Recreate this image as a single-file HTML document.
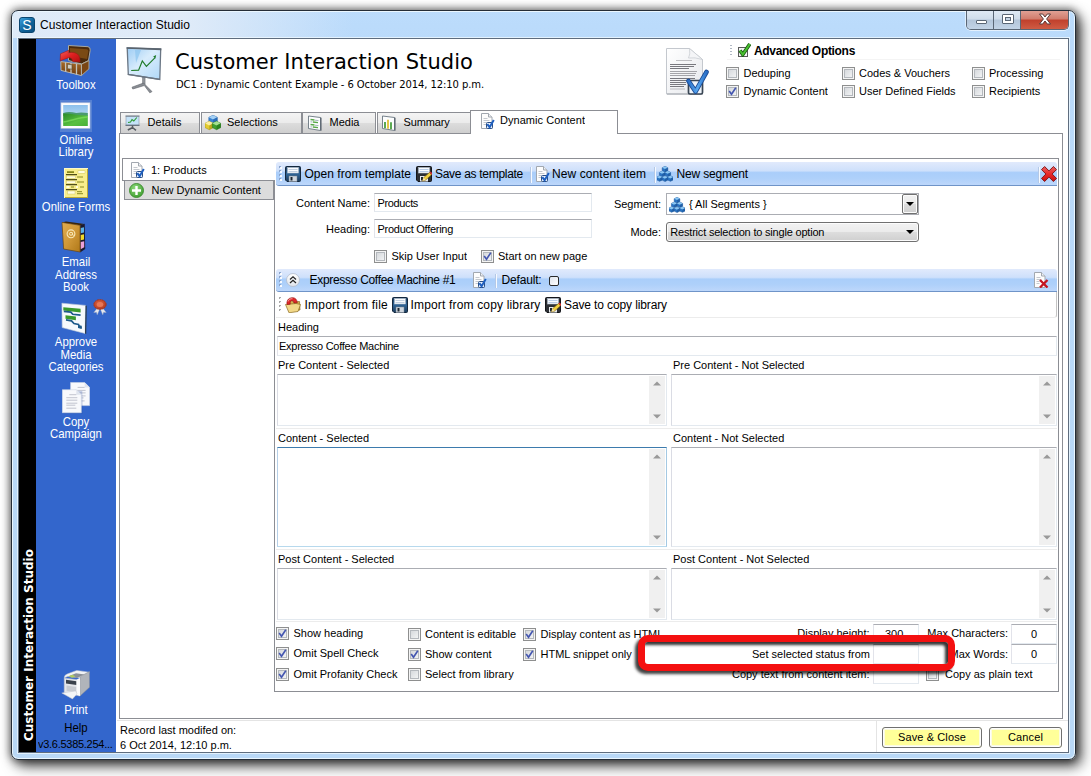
<!DOCTYPE html>
<html lang="en"><head><meta charset="utf-8"><title>Customer Interaction Studio</title>
<style>
html,body{margin:0;padding:0}
body{width:1091px;height:776px;position:relative;overflow:hidden;background:#fff;font-family:"Liberation Sans",sans-serif;font-size:11px;color:#000}
.a{position:absolute;box-sizing:border-box}
.t{white-space:nowrap}
.ms{font:11px "Liberation Sans",sans-serif;transform:scaleY(1.06)}
.sg{font:12px "Liberation Sans",sans-serif}
.sgb{font:bold 12px "Liberation Sans",sans-serif}
.vd{font-family:"DejaVu Sans","Liberation Sans",sans-serif}
.w{color:#fff}
.c{text-align:center}
.tab{border:1px solid #8c8e94;border-bottom:none;background:linear-gradient(#f4f4f4 0%,#ebebeb 48%,#dcdcdc 52%,#cfcfcf 100%)}
.inp{border:1px solid #e3e9ef;border-top-color:#abadb3;border-left-color:#e2e3ea;background:#fff}
.ta{border:1px solid #e3e9ef;border-top-color:#abadb3;border-left-color:#dadce4;background:#fff}
.sb{background:#f0f0f0}
.cb{width:13px;height:13px;border:1px solid #8e8f8f;background:linear-gradient(135deg,#cfd2d6 0%,#e6e8ea 55%,#fafafa 100%);box-shadow:inset 0 0 0 1px #f4f4f4, inset 0 0 0 2px #b4b8bd}
.tb{background:linear-gradient(#e1eafc 0%,#cee0fb 38%,#aacefa 46%,#aed0fa 70%,#bdd7fb 100%);border-radius:3px 3px 0 3px;border-bottom:1px solid #6f94c8}
.btn{border:1px solid #707070;border-radius:3px;background:#ffff99;box-shadow:inset 0 0 0 1px #fdfdfd, inset 0 0 0 2px #fcfce0}

</style></head>
<body>
<div class="a" id="win" style="left:11px;top:10px;width:1065px;height:750px;border-radius:7px;border:1px solid #252d37;background:linear-gradient(#bcdcfc 0%,#badafa 4%,#b9d8f6 100%);box-shadow:inset 0 0 0 1px rgba(240,250,255,.9), 0 0 9px 1px rgba(0,0,0,.55), 5px 6px 14px rgba(0,0,0,.7)"></div>
<div class="a" style="left:13px;top:12px;width:340px;height:26px;border-radius:5px 0 0 0;background:linear-gradient(90deg,rgba(226,236,248,.9) 0%,rgba(226,236,248,.95) 50%,rgba(226,236,248,0) 100%)"></div>
<div class="a " style="left:18px;top:38px;width:1051px;height:715px;border:1px solid #5f6d7e;background:#fff;box-shadow:0 0 0 1px rgba(240,250,255,.75)"></div>
<div class="a" style="left:19px;top:17px;width:16px;height:16px;border-radius:3px;background:linear-gradient(135deg,#3aa0dc,#0c5f96 60%,#0a4f80);border:1px solid #0a4670;color:#fff;font:14px/15px 'Liberation Sans',sans-serif;text-align:center">S</div>
<span id="t1" class="a t sg" style="top:17.5px;line-height:14px;left:40px;letter-spacing:0.047px;">Customer Interaction Studio</span>
<div class="a" style="left:966px;top:11px;width:103px;height:19px;border:1px solid #5a6675;border-top:none;border-radius:0 0 5px 5px;overflow:hidden;box-shadow:0 1px 0 rgba(255,255,255,.6),1px 0 0 rgba(255,255,255,.5),-1px 0 0 rgba(255,255,255,.5)"><div class="a" style="left:0;top:0;width:27px;height:18px;background:linear-gradient(#dfe9f4 0%,#cfdcea 45%,#b4c6da 50%,#c2d3e6 100%);border-right:1px solid #5a6675"></div><div class="a" style="left:27px;top:0;width:27px;height:18px;background:linear-gradient(#dfe9f4 0%,#cfdcea 45%,#b4c6da 50%,#c2d3e6 100%);border-right:1px solid #5a6675"></div><div class="a" style="left:54px;top:0;width:48px;height:18px;background:linear-gradient(#e0a094 0%,#d07c6c 45%,#c0402c 50%,#cf5c44 100%)"></div><div class="a" style="left:9px;top:9px;width:11px;height:4px;background:#fff;border:1px solid #5a6675;border-radius:1px"></div><div class="a" style="left:35px;top:3px;width:12px;height:10px;background:#fff;border:1px solid #5a6675;border-radius:1px"></div><div class="a" style="left:38px;top:6px;width:6px;height:4px;background:#c4d3e4;border:1px solid #5a6675"></div><svg class="a" style="left:71px;top:2px" width="14" height="12" viewBox="0 0 14 12"><path d="M1.500 1h3.200l2.300 3 2.300-3h3.200l-3.900 5 3.900 5h-3.200l-2.300-3-2.300 3h-3.200l3.900-5z" fill="#fff" stroke="#5a3a38" stroke-width="1"/></svg></div>
<div class="a " style="left:19px;top:39px;width:17px;height:713px;background:#000"></div>
<div class="a " style="left:36px;top:39px;width:80px;height:713px;background:#3366cc"></div>
<div class="a t vd w" style="left:21px;top:752px;width:210px;height:17px;line-height:17px;font-size:12px;font-weight:bold;transform-origin:0 0;transform:rotate(-90deg);padding-left:11px" id="vtxt">Customer Interaction Studio</div>
<div class="a" style="left:58px;top:42px;line-height:0"><svg width="34" height="36" viewBox="0 0 34 36"><defs><linearGradient id="g1" x1="0" y1="0" x2="0" y2="1"><stop offset="0" stop-color="#a86a28"/><stop offset="1" stop-color="#6a3a10"/></linearGradient><linearGradient id="g2" x1="0" y1="0" x2="1" y2="1"><stop offset="0" stop-color="#f06060"/><stop offset=".5" stop-color="#e02020"/><stop offset="1" stop-color="#b01010"/></linearGradient></defs><path d="M10.500 3.500l19.500 1.200q2.500.500 2.200 3.500l-1.700 10.300-7 3.500-13-3.500z" fill="#4a2a0c" stroke="#a8a8a0" stroke-width="1"/><path d="M12 6l17 1.200q1.500.300 1.300 2.300l-1.200 7.500-17-3z" fill="#7a4a14"/><path d="M23.400 22.200l7.600-3.600-.100 8.300-7.500 6.700z" fill="#7a4614" stroke="#b8b4a0" stroke-width=".8"/><path d="M2.800 19.600l20.600 2.600v11.400l-20.400-5.200z" fill="url(#g1)" stroke="#b4b4ac" stroke-width="1"/><path d="M7.500 20.300l.200 9.500M13 21v10.300M18.500 21.700v11" stroke="#c4c4bc" stroke-width="1.300"/><rect x="9.500" y="22.300" width="4.500" height="4.500" fill="#d0ccc0" stroke="#5a4a30" stroke-width=".6" transform="skewY(7) translate(0,-1.300)"/><path d="M2.200 18.800l.300-7 8.500-3.600-.800 2.600q7-1.500 10.500 2.500 1.500 2 1.300 6.700l-7.300-.400q-.200-3.200-3.200-4.200z" fill="url(#g2)" stroke="#a01818" stroke-width=".6"/></svg></div>
<span class="a t ms c" style="left:36px;width:80px;top:77.5px;line-height:14px;font-size:11.400px;color:#fff">Toolbox</span>
<div class="a" style="left:60px;top:100px;line-height:0"><svg width="32" height="32" viewBox="0 0 32 32"><defs><linearGradient id="g3" x1="0" y1="0" x2="0" y2="1"><stop offset="0" stop-color="#8cc0ec"/><stop offset="1" stop-color="#d8eef8"/></linearGradient><linearGradient id="g4" x1="0" y1="0" x2="1" y2="1"><stop offset="0" stop-color="#2a8a28"/><stop offset=".6" stop-color="#58c040"/><stop offset="1" stop-color="#48b038"/></linearGradient></defs><rect x="0" y="0" width="32" height="32" fill="#5580d2"/><rect x="1" y="2.800" width="29" height="25.500" fill="#fdfdfd" stroke="#b8c4dc" stroke-width=".6"/><rect x="3.200" y="5" width="24.600" height="21" fill="url(#g3)"/><path d="M3.200 13c4-1.500 9-1 13 0 4-1 8-.500 11.600 0v3h-24.600z" fill="#4a9a70"/><path d="M3.200 13.500c8 0 16 2 24.600 2v10.500h-24.600z" fill="url(#g4)"/><path d="M3.200 22c8-1 16-5 24.600-5" fill="none" stroke="#80e060" stroke-width="1.500" opacity=".7"/></svg></div>
<span class="a t ms c" style="left:36px;width:80px;top:132.5px;line-height:14px;font-size:11.400px;color:#fff">Online</span>
<span class="a t ms c" style="left:36px;width:80px;top:145px;line-height:14px;font-size:11.400px;color:#fff">Library</span>
<div class="a" style="left:64px;top:168px;line-height:0"><svg width="24" height="30" viewBox="0 0 24 30"><rect x=".500" y=".500" width="23" height="29" fill="#f8ee8c" stroke="#fdf8c8" stroke-width="1"/><rect x="23" y="1" width="1" height="29" fill="#b8a838"/><rect x="1" y="29" width="23" height="1" fill="#b8a838"/><rect x="3" y="3.300" width="7" height="1.600" fill="#7a7a10"/><rect x="14" y="2.800" width="7" height="2.400" fill="#fffde0" stroke="#c8bc58" stroke-width=".4"/><rect x="2" y="6.200" width="11" height="1" fill="#2a2a00"/><rect x="2.500" y="8" width="9" height="2.400" fill="#fffde0" stroke="#c8bc58" stroke-width=".4"/><rect x="13" y="8.500" width="6" height="1" fill="#8a8a20"/><rect x="2" y="11.200" width="11" height="1" fill="#2a2a00"/><rect x="2.500" y="13" width="9" height="2.400" fill="#fffde0" stroke="#c8bc58" stroke-width=".4"/><rect x="13" y="13.500" width="7" height="1" fill="#8a8a20"/><rect x="2" y="16.200" width="11" height="1" fill="#2a2a00"/><rect x="2.500" y="18" width="3" height="2" fill="#fffde0"/><rect x="7" y="18.500" width="3" height="1" fill="#8a8a20"/><rect x="12" y="18" width="2" height="2" fill="#fffde0"/><rect x="16" y="18.500" width="4" height="1" fill="#8a8a20"/><rect x="2" y="21.200" width="11" height="1" fill="#2a2a00"/><rect x="3.500" y="23" width="7.500" height="3" fill="#fffde0" stroke="#c8bc58" stroke-width=".4"/><rect x="13" y="23.200" width="5" height="1" fill="#8a8a20"/><rect x="13" y="25.200" width="6" height="1" fill="#8a8a20"/></svg></div>
<span class="a t ms c" style="left:36px;width:80px;top:199.5px;line-height:14px;font-size:11.400px;color:#fff">Online Forms</span>
<div class="a" style="left:61px;top:221px;line-height:0"><svg width="26" height="33" viewBox="0 0 26 33"><defs><linearGradient id="g5" x1="0" y1="0" x2="1" y2="1"><stop offset="0" stop-color="#e0ac50"/><stop offset=".5" stop-color="#d09838"/><stop offset="1" stop-color="#b07818"/></linearGradient></defs><path d="M1 1.400l4-1 18.500 2.500-4.400 1.400z" fill="#3a2408"/><path d="M19.100 4.300l4.600-1.500.500 25.200-5.100 3.500z" fill="#1a1a30"/><path d="M19.600 7l3.400-.800v5.300l-3.400.800z" fill="#58b0e8"/><path d="M19.600 14l3.400-.800v5.300l-3.400.800z" fill="#f0d828"/><path d="M19.600 21l3.600-.800v6l-3.600 2z" fill="#e8a0d8"/><path d="M1 1.400l18.100 2.900v26.700l-16.500-3z" fill="url(#g5)" stroke="#6a4410" stroke-width=".7"/><circle cx="10" cy="12.800" r="3.900" fill="none" stroke="#f8e8b8" stroke-width="1.100"/><circle cx="10" cy="12.800" r="1.500" fill="none" stroke="#f8e8b8" stroke-width="1"/><path d="M11.500 11.500v2.500q1 .800 2.200-.500" fill="none" stroke="#f8e8b8" stroke-width=".9"/></svg></div>
<span class="a t ms c" style="left:36px;width:80px;top:255px;line-height:14px;font-size:11.400px;color:#fff">Email</span>
<span class="a t ms c" style="left:36px;width:80px;top:267.5px;line-height:14px;font-size:11.400px;color:#fff">Address</span>
<span class="a t ms c" style="left:36px;width:80px;top:280px;line-height:14px;font-size:11.400px;color:#fff">Book</span>
<div class="a" style="left:61px;top:302px;line-height:0"><svg width="26" height="33" viewBox="0 0 26 33"><path d="M.900 1.200l23.700 2.200-.600 28-22.800-5.800z" fill="#f6f9fc" stroke="#c4ccd8" stroke-width=".6"/><path d="M24.600 3.400l1.200.300-.600 28.300-1.200-.600z" fill="#2a3a4a"/><path d="M2.300 5.300l17.300 1.500v3.600l-17.300-1.800z" fill="#3a9a2c"/><path d="M2.800 9.300l7 .800 2 2.200 7.800.900" fill="none" stroke="#1e5a8a" stroke-width="1.700"/><path d="M4.500 13.300l10.400 1.200v3.800l-10.400-1.600z" fill="#3a9a2c"/><path d="M5 17.800l5.500 1 2.500 2.700 4.500 1 1 2.500 2.200.600" fill="none" stroke="#1e5a8a" stroke-width="1.700"/><path d="M17 23l3.700.800v3.200l-3.700-.900z" fill="#1e5a8a"/></svg></div>
<div class="a" style="left:93px;top:299px;line-height:0"><svg width="14" height="17" viewBox="0 0 14 17"><defs><radialGradient id="g6" cx=".45" cy=".4" r=".7"><stop offset="0" stop-color="#e06848"/><stop offset="1" stop-color="#a83018"/></radialGradient></defs><path d="M4 9.500l-3.200 4 2.700-.300.700 2.600 2.300-5.300zM10 9.500l3.200 4-2.700-.300-.700 2.600-2.300-5.300z" fill="#e4e8f0" stroke="#a8b0c0" stroke-width=".4"/><ellipse cx="7" cy="5.500" rx="6.200" ry="4.900" fill="url(#g6)" stroke="#a83018" stroke-width=".8" stroke-dasharray="1.800 .700"/><ellipse cx="7" cy="5.500" rx="3.300" ry="2.500" fill="#e87858"/></svg></div>
<span class="a t ms c" style="left:36px;width:80px;top:335px;line-height:14px;font-size:11.400px;color:#fff">Approve</span>
<span class="a t ms c" style="left:36px;width:80px;top:347.5px;line-height:14px;font-size:11.400px;color:#fff">Media</span>
<span class="a t ms c" style="left:36px;width:80px;top:360px;line-height:14px;font-size:11.400px;color:#fff">Categories</span>
<div class="a" style="left:62px;top:382px;line-height:0"><svg width="28" height="32" viewBox="0 0 28 32"><path d="M8.6 0.4h14l5 5v18.2h-19z" fill="#f8f9fc" stroke="#d0d6e4" stroke-width=".6"/><path d="M22.6 0.4v5h5z" fill="#dfe4ee"/><path d="M15.6 5.4h7M12.6 8.4h11M12.6 10.9h11M12.6 13.9h11M12.6 15.9h9M12.6 18.9h10" stroke="#b4b8c4" stroke-width=".8"/><path d="M.300 8h19l.500 23h-19.500z" fill="#2a50a8" opacity=".25" transform="translate(1,1)"/><path d="M0.3 7.7h14l5 5v18h-19z" fill="#f8f9fc" stroke="#d0d6e4" stroke-width=".6"/><path d="M14.3 7.7v5h5z" fill="#dfe4ee"/><path d="M7.3 12.7h7M4.3 15.7h11M4.3 18.2h11M4.3 21.2h11M4.3 23.2h9M4.3 26.2h10" stroke="#b4b8c4" stroke-width=".8"/></svg></div>
<span class="a t ms c" style="left:36px;width:80px;top:414.5px;line-height:14px;font-size:11.400px;color:#fff">Copy</span>
<span class="a t ms c" style="left:36px;width:80px;top:427px;line-height:14px;font-size:11.400px;color:#fff">Campaign</span>
<div class="a" style="left:61px;top:670px;line-height:0"><svg width="30" height="31" viewBox="0 0 30 31"><path d="M3.200 8q0-3 3-4l9.500-3.600 12.700 1.800-9.400 5.800-12.500-1.500z" fill="#f0f2f4" stroke="#c0c4cc" stroke-width=".5"/><path d="M7 6.500l8-3.200 8.500 1.300-7.500 3.500z" fill="#8a9098"/><path d="M7.500 6.300l4-1.600 3 1.800-3.500 1.300z" fill="#b0cc60"/><path d="M19 8q0-1.500 1.500-2.200l7.900-4.200.1 15.700-9.500 8.700z" fill="#b0b4ba" stroke="#888c94" stroke-width=".5"/><path d="M3.200 8l15.800 2v16l-15.800-3z" fill="#e4e6ea" stroke="#b8bcc4" stroke-width=".5"/><path d="M5 9.800l10.500 1.400v3.800l-10.500-1.600z" fill="#3a424c"/><path d="M5.500 15.500l10 1.500v5.500l-10-1.700z" fill="#c8ccd2"/><path d="M15.500 10q1.500-1.500 3.500-2v18l-3.500-1.500z" fill="#fafbfc"/><path d="M.800 23l13.900-2.100 1.300 3-4.500 5z" fill="#f4f6f8" stroke="#c4c8d0" stroke-width=".5"/></svg></div>
<span class="a t ms c" style="left:36px;width:80px;top:702.5px;line-height:14px;font-size:11.400px;color:#fff">Print</span>
<span class="a t ms c" style="left:36px;width:80px;top:721px;line-height:14px;font-size:11.400px;color:#000">Help</span>
<span id="t2" class="a t ms" style="top:737px;line-height:14px;left:38px;letter-spacing:-0.275px;">v3.6.5385.254...</span>
<div class="a" style="left:126px;top:46px;line-height:0"><svg width="37" height="49" viewBox="0 0 37 49"><defs><linearGradient id="g7" x1="0" y1="0" x2="1" y2="1"><stop offset="0" stop-color="#9cccf4"/><stop offset=".45" stop-color="#d8ecfc"/><stop offset="1" stop-color="#b0d8f8"/></linearGradient></defs><path d="M16.500 31h2.600v7.500h-2.600z" fill="#90949a" stroke="#6a6e74" stroke-width=".5"/><path d="M17.500 37l-11.500 4.200.800 1.800 11.500-3.500 5.500 7.300 2.200-1.200z" fill="#8a8e94" stroke="#5e6268" stroke-width=".6"/><path d="M1.200 1.800l33.500 1.200-.900 30.400-31.500-5z" fill="url(#g7)" stroke="#6a7684" stroke-width="1.300"/><path d="M.600 1.200l34.700 1.300v1.700l-34.700-1.400z" fill="#5a646e"/><path d="M1.800 27.800l32 5v1.200l-32-5z" fill="#6a7480"/><path d="M9 4l6 0-5 13z" fill="#8cc4f0" opacity=".7"/><path d="M5.200 24.500l7.400-.400 3.700-9.100 4.100 5.400 8.700-8.700" fill="none" stroke="#1e7a28" stroke-width="1.150"/><path d="M27.200 10.500l3-1.500-.800 3.600z" fill="#1e7a28"/></svg></div>
<span id="t3" class="a t vd" style="top:47.5px;line-height:28px;left:175px;letter-spacing:0.068px;font-size:21px;">Customer Interaction Studio</span>
<span id="t4" class="a t vd" style="top:77.5px;line-height:14px;left:176px;letter-spacing:-0.092px;font-size:10px;">DC1 : Dynamic Content Example - 6 October 2014, 12:10 p.m.</span>
<div class="a" style="left:665px;top:47px;line-height:0"><svg width="44" height="49" viewBox="0 0 44 49"><defs><linearGradient id="g8" x1="0" y1="0" x2="1" y2="1"><stop offset="0" stop-color="#ffffff"/><stop offset="1" stop-color="#e6e8ec"/></linearGradient><linearGradient id="g9" x1="0" y1="0" x2="1" y2="0"><stop offset="0" stop-color="#2a70c8"/><stop offset=".5" stop-color="#58a8f0"/><stop offset="1" stop-color="#2a70c8"/></linearGradient></defs><path d="M1.500 1.500h23l13 11v34.500h-36z" fill="url(#g8)" stroke="#c4c8ce" stroke-width="1"/><path d="M2 47h35.500" stroke="#b4b8be" stroke-width="1.400"/><path d="M24.500 1.500q1 6-1 9.500 6-1 14 1.500z" fill="#f4f5f7" stroke="#c4c8ce" stroke-width=".7"/><path d="M11 13.500h16" stroke="#b0b0b4" stroke-width=".8"/><path d="M5 17.500h26M5 19.500h24M5 21.500h19" stroke="#6a6a70" stroke-width=".9"/><path d="M5 24.500h27M5 26.500h26M5 28.500h25" stroke="#909096" stroke-width=".8"/><path d="M5 31.500h25M5 33.500h17M5 35.500h16M5 37.500h16M5 39.500h14" stroke="#6a6a70" stroke-width=".9"/><path d="M5 42h15" stroke="#a0a0a6" stroke-width=".7"/><rect x="23.500" y="33.500" width="14" height="13.500" rx="1.500" fill="#eef4fb" stroke="#3a4654" stroke-width="1.700"/><path d="M23.500 34l7 10.500 11-19.500" fill="none" stroke="#1a4a94" stroke-width="4.600" stroke-linecap="round" stroke-linejoin="round"/><path d="M23.500 34l7 10.500 11-19.500" fill="none" stroke="url(#g9)" stroke-width="2.900" stroke-linecap="round" stroke-linejoin="round"/></svg></div>
<div class="a" style="left:730px;top:45px;width:2px;height:12px;background:repeating-linear-gradient(#b0b8c4 0 1px,transparent 1px 3px)"></div>
<div class="a" style="left:737px;top:43px;line-height:0"><svg width="14" height="14" viewBox="0 0 14 14"><rect x="1.500" y="4.500" width="9" height="9" fill="#f4f4f4" stroke="#5a5a5a"/><path d="M3 7.500l2.800 4 7-10.500" fill="none" stroke="#1a5a10" stroke-width="3.600"/><path d="M3 7.500l2.800 4 7-10.500" fill="none" stroke="#48c030" stroke-width="2"/></svg></div>
<span id="t5" class="a t sgb" style="top:44px;line-height:14px;left:754px;letter-spacing:-0.314px;">Advanced Options</span>
<div class="a " style="left:727px;top:59px;width:333px;height:1px;background:#f4f4f4"></div>
<div class="a cb" style="left:726px;top:66.5px"></div>
<span id="t6" class="a t ms" style="top:66px;line-height:14px;left:743.5px;">Deduping</span>
<div class="a cb" style="left:726px;top:84.5px"><svg width="11" height="11" viewBox="0 0 11 11" style="position:absolute;left:0;top:0"><path d="M2.200 5l2.300 3.300 4.300-6.600" fill="none" stroke="#4456b0" stroke-width="1.600"/></svg></div>
<span id="t7" class="a t ms" style="top:84px;line-height:14px;left:743.5px;">Dynamic Content</span>
<div class="a cb" style="left:842px;top:66.5px"></div>
<span id="t8" class="a t ms" style="top:66px;line-height:14px;left:859px;">Codes &amp; Vouchers</span>
<div class="a cb" style="left:842px;top:84.5px"></div>
<span id="t9" class="a t ms" style="top:84px;line-height:14px;left:859px;">User Defined Fields</span>
<div class="a cb" style="left:972px;top:66.5px"></div>
<span id="t10" class="a t ms" style="top:66px;line-height:14px;left:989px;">Processing</span>
<div class="a cb" style="left:972px;top:84.5px"></div>
<span id="t11" class="a t ms" style="top:84px;line-height:14px;left:989px;">Recipients</span>
<div class="a " style="left:119px;top:133px;width:944px;height:586px;border:1px solid #8c8e94;background:#fff"></div>
<div class="a tab" style="left:120px;top:112px;width:80px;height:21px;"></div>
<div class="a" style="left:125px;top:115px;line-height:0"><svg width="16" height="16" viewBox="0 0 16 16"><rect x="1" y="1.500" width="13" height="8.500" fill="#c4e2f8" stroke="#8a98a8" stroke-width=".6"/><path d="M.500 1h14M.500 10.300h14" stroke="#6a7480" stroke-width="1.200"/><path d="M3 7.500l2.500-.500 1.500-2.500 1.800 1.500 3-3.500" fill="none" stroke="#2c9a30" stroke-width="1.100"/><path d="M7.500 10.500v2.500M7.800 12.500l-5 2.500M7.500 12.500l3.500 2.800" stroke="#555a60" stroke-width="1.500" fill="none"/></svg></div>
<span id="t12" class="a t ms" style="top:115px;line-height:14px;left:147.5px;letter-spacing:0.052px;">Details</span>
<div class="a tab" style="left:201px;top:112px;width:101px;height:21px;"></div>
<div class="a" style="left:205px;top:115px;line-height:0"><svg width="16" height="16" viewBox="0 0 16 16"><path d="M3.8 2.325l4.25 -2.125 4.25 2.125v4.25l-4.25 2.125 -4.25 -2.125z" fill="#3a84d4" stroke="#1e5aa0" stroke-width=".5"/><path d="M3.8 2.325l4.25 -2.125 4.25 2.125 -4.25 2.125z" fill="#a4d0f4"/><path d="M8.05 4.45v4.25l4.25 -2.125v-4.25z" fill="#1e5aa0" opacity=".55"/><path d="M0 8.325l4.25 -2.125 4.25 2.125v4.25l-4.25 2.125 -4.25 -2.125z" fill="#e4cc30" stroke="#a08c10" stroke-width=".5"/><path d="M0 8.325l4.25 -2.125 4.25 2.125 -4.25 2.125z" fill="#fbf0a0"/><path d="M4.25 10.45v4.25l4.25 -2.125v-4.25z" fill="#a08c10" opacity=".55"/><path d="M7.3 8.325l4.25 -2.125 4.25 2.125v4.25l-4.25 2.125 -4.25 -2.125z" fill="#3ea030" stroke="#1e6e14" stroke-width=".5"/><path d="M7.3 8.325l4.25 -2.125 4.25 2.125 -4.25 2.125z" fill="#a4e090"/><path d="M11.55 10.45v4.25l4.25 -2.125v-4.25z" fill="#1e6e14" opacity=".55"/></svg></div>
<span id="t13" class="a t ms" style="top:115px;line-height:14px;left:227px;">Selections</span>
<div class="a tab" style="left:302px;top:112px;width:74px;height:21px;"></div>
<div class="a" style="left:308px;top:115px;line-height:0"><svg width="16" height="16" viewBox="0 0 16 16"><path d="M.500 1l12 1.500v13l-12-2z" fill="#fcfdfe" stroke="#6a7680" stroke-width=".9"/><path d="M12.500 2.500l1 .300v13l-1-.300z" fill="#4a5560"/><path d="M2.500 4.500l4 .500M5 7l5 .600M2.500 9.500l4 .500M5 12l5 .600" stroke="#58a848" stroke-width="1.300"/><path d="M7 5.200l3.500.400M2.500 6.800l2 .200M7 10.200l3.500.400M2.500 11.800l2 .200" stroke="#a8b4c0" stroke-width="1"/></svg></div>
<span id="t14" class="a t ms" style="top:115px;line-height:14px;left:329.5px;">Media</span>
<div class="a tab" style="left:377px;top:112px;width:94px;height:21px;"></div>
<div class="a" style="left:382px;top:115px;line-height:0"><svg width="16" height="16" viewBox="0 0 16 16"><path d="M.500 1l12 1.500v13l-12-2z" fill="#fcfdfe" stroke="#6a7680" stroke-width=".9"/><path d="M12.500 2.500l1 .300v13l-1-.300z" fill="#4a5560"/><path d="M3 13.200v-6.200" stroke="#4aa040" stroke-width="1.800"/><path d="M6 13.700v-9" stroke="#e0c030" stroke-width="1.800"/><path d="M9 14.200v-7" stroke="#4aa040" stroke-width="1.800"/></svg></div>
<span id="t15" class="a t ms" style="top:115px;line-height:14px;left:403.5px;letter-spacing:-0.152px;">Summary</span>
<div class="a " style="left:470px;top:110px;width:148px;height:24px;border:1px solid #8c8e94;border-bottom:none;background:#fff"></div>
<div class="a" style="left:480px;top:113px;line-height:0"><svg width="16" height="16" viewBox="0 0 16 16"><path d="M1.500 .500h7l3.500 3.500v11.500h-10.500z" fill="#fdfdfd" stroke="#a2a8b0"/><path d="M8.500 .500v3.500h3.500" fill="#eef0f3" stroke="#a2a8b0"/><path d="M3.500 5.500h4M3.500 7.500h6M3.500 9.500h3M3.500 11.500h3" stroke="#c4c8ce"/><rect x="6.500" y="9.500" width="6" height="6" rx="1" fill="#e4eefa" stroke="#2a4f86"/><path d="M7.300 11.200l2.300 3 4.200-7.200" fill="none" stroke="#1e5fc0" stroke-width="2"/></svg></div>
<span id="t16" class="a t ms" style="top:113px;line-height:14px;left:500px;letter-spacing:0.042px;">Dynamic Content</span>
<div class="a " style="left:274px;top:158px;width:785px;height:534px;border:1px solid #8c8e94;background:#fff"></div>
<div class="a " style="left:122px;top:158px;width:153px;height:23px;border:1px solid #8c8e94;border-right:none;background:#fff"></div>
<div class="a" style="left:130px;top:162px;line-height:0"><svg width="16" height="16" viewBox="0 0 16 16"><path d="M1.500 .500h7l3.500 3.500v11.500h-10.500z" fill="#fdfdfd" stroke="#a2a8b0"/><path d="M8.500 .500v3.500h3.500" fill="#eef0f3" stroke="#a2a8b0"/><path d="M3.500 5.500h4M3.500 7.500h6M3.500 9.500h3M3.500 11.500h3" stroke="#c4c8ce"/><rect x="6.500" y="9.500" width="6" height="6" rx="1" fill="#e4eefa" stroke="#2a4f86"/><path d="M7.300 11.200l2.300 3 4.200-7.200" fill="none" stroke="#1e5fc0" stroke-width="2"/></svg></div>
<span id="t17" class="a t ms" style="top:162.5px;line-height:14px;left:151px;">1: Products</span>
<div class="a " style="left:124px;top:180px;width:150px;height:20px;border:1px solid #8c8e94;background:#dcdcdc"></div>
<div class="a" style="left:129px;top:182.5px;line-height:0"><svg width="15" height="15" viewBox="0 0 15 15"><defs><radialGradient id="g10" cx=".4" cy=".3" r=".8"><stop offset="0" stop-color="#8cd878"/><stop offset="1" stop-color="#3a9a2c"/></radialGradient></defs><circle cx="7.500" cy="7.500" r="7" fill="url(#g10)" stroke="#3a8a2e" stroke-width=".9"/><path d="M7.500 3v9M3 7.500h9" stroke="#fff" stroke-width="2.400"/></svg></div>
<span id="t18" class="a t ms" style="top:182.5px;line-height:14px;left:151.5px;">New Dynamic Content</span>
<div class="a tb" style="left:276px;top:162px;width:781px;height:24px;"></div>
<div class="a" style="left:279px;top:166px;width:2px;height:16px;background:repeating-linear-gradient(#8aa4cc 0 2px,transparent 2px 4px)"></div>
<div class="a" style="left:280px;top:167px;width:2px;height:16px;background:repeating-linear-gradient(rgba(255,255,255,.9) 0 2px,transparent 2px 4px)"></div>
<div class="a" style="left:285px;top:166px;line-height:0"><svg width="16" height="16" viewBox="0 0 16 16"><defs><linearGradient id="g11" x1="0" y1="0" x2="0" y2="1"><stop offset="0" stop-color="#1e3e60"/><stop offset=".5" stop-color="#2f6496"/><stop offset="1" stop-color="#1c3a5a"/></linearGradient></defs><path d="M.500 1.500q0-1 1-1h13q1 0 1 1v13q0 1-1 1h-12.500l-1.500-1.500z" fill="url(#g11)" stroke="#14283e"/><rect x="2.500" y="1.500" width="11" height="5.500" fill="#fafcfe" stroke="#aebccc" stroke-width=".6"/><path d="M3.500 3.500h9M3.500 5.500h9" stroke="#c2d0e0"/><rect x="4" y="10" width="8" height="5.500" fill="#cfd6de" stroke="#7a8694" stroke-width=".5"/><rect x="5.500" y="11" width="2" height="3.500" fill="#1c2630"/></svg></div>
<span id="t19" class="a t sg" style="top:167px;line-height:14px;left:304.5px;letter-spacing:0.025px;">Open from template</span>
<div class="a" style="left:416px;top:166px;line-height:0"><svg width="16" height="16" viewBox="0 0 16 16"><path d="M.500 1.500q0-1 1-1h13q1 0 1 1v13q0 1-1 1h-12.500l-1.500-1.500z" fill="#2c2f34" stroke="#14161a"/><rect x="2.500" y="1.500" width="11" height="5.500" fill="#fafcfe" stroke="#aebccc" stroke-width=".6"/><path d="M3.500 3.500h9M3.500 5.500h9" stroke="#b8cce6"/><rect x="4" y="10" width="8" height="5.500" fill="#e8eaec"/><rect x="5" y="11" width="2" height="3.500" fill="#1c2630"/><path d="M6.500 14.800l1-3 6-5.300 2 2.300-6 5.300z" fill="#f0d040" stroke="#8a6c10" stroke-width=".7"/><path d="M13.500 6.500l1.200-1 2 2.300-1.200 1z" fill="#d83030"/><path d="M6.500 14.800l1-3 2 2.300z" fill="#f4e4b8"/></svg></div>
<span id="t20" class="a t sg" style="top:167px;line-height:14px;left:435px;letter-spacing:-0.295px;">Save as template</span>
<div class="a" style="left:530px;top:167px;width:2px;height:16px;background:#f6faff;border-left:1px solid #b4c8e6"></div>
<div class="a" style="left:535px;top:166px;line-height:0"><svg width="16" height="16" viewBox="0 0 16 16"><path d="M1.500 .500h7l3.500 3.500v11.500h-10.500z" fill="#fdfdfd" stroke="#a2a8b0"/><path d="M8.500 .500v3.500h3.500" fill="#eef0f3" stroke="#a2a8b0"/><path d="M3.500 5.500h4M3.500 7.500h6M3.500 9.500h3M3.500 11.500h3" stroke="#c4c8ce"/><rect x="6.500" y="9.500" width="6" height="6" rx="1" fill="#e4eefa" stroke="#2a4f86"/><path d="M7.300 11.200l2.300 3 4.200-7.200" fill="none" stroke="#1e5fc0" stroke-width="2"/></svg></div>
<span id="t21" class="a t sg" style="top:167px;line-height:14px;left:552px;letter-spacing:0.080px;">New content item</span>
<div class="a" style="left:654px;top:167px;width:2px;height:16px;background:#f6faff;border-left:1px solid #b4c8e6"></div>
<div class="a" style="left:657px;top:166px;line-height:0"><svg width="16" height="16" viewBox="0 0 16 16"><path d="M5.2 1.7l2.8 -1.4 2.8 1.4v2.8l-2.8 1.4 -2.8 -1.4z" fill="#2a74c4" stroke="#1a5296" stroke-width=".5"/><path d="M5.2 1.7l2.8 -1.4 2.8 1.4 -2.8 1.4z" fill="#8cc8f4"/><path d="M8 3.1v2.8l2.8 -1.4v-2.8z" fill="#1a5296" opacity=".55"/><path d="M2.4 6.4l2.8 -1.4 2.8 1.4v2.8l-2.8 1.4 -2.8 -1.4z" fill="#2a74c4" stroke="#1a5296" stroke-width=".5"/><path d="M2.4 6.4l2.8 -1.4 2.8 1.4 -2.8 1.4z" fill="#8cc8f4"/><path d="M5.2 7.8v2.8l2.8 -1.4v-2.8z" fill="#1a5296" opacity=".55"/><path d="M8 6.4l2.8 -1.4 2.8 1.4v2.8l-2.8 1.4 -2.8 -1.4z" fill="#2a74c4" stroke="#1a5296" stroke-width=".5"/><path d="M8 6.4l2.8 -1.4 2.8 1.4 -2.8 1.4z" fill="#8cc8f4"/><path d="M10.8 7.8v2.8l2.8 -1.4v-2.8z" fill="#1a5296" opacity=".55"/><path d="M-0.2 11.1l2.8 -1.4 2.8 1.4v2.8l-2.8 1.4 -2.8 -1.4z" fill="#2a74c4" stroke="#1a5296" stroke-width=".5"/><path d="M-0.2 11.1l2.8 -1.4 2.8 1.4 -2.8 1.4z" fill="#8cc8f4"/><path d="M2.6 12.5v2.8l2.8 -1.4v-2.8z" fill="#1a5296" opacity=".55"/><path d="M5.2 11.3l2.8 -1.4 2.8 1.4v2.8l-2.8 1.4 -2.8 -1.4z" fill="#2a74c4" stroke="#1a5296" stroke-width=".5"/><path d="M5.2 11.3l2.8 -1.4 2.8 1.4 -2.8 1.4z" fill="#8cc8f4"/><path d="M8 12.7v2.8l2.8 -1.4v-2.8z" fill="#1a5296" opacity=".55"/><path d="M10.6 11.1l2.8 -1.4 2.8 1.4v2.8l-2.8 1.4 -2.8 -1.4z" fill="#2a74c4" stroke="#1a5296" stroke-width=".5"/><path d="M10.6 11.1l2.8 -1.4 2.8 1.4 -2.8 1.4z" fill="#8cc8f4"/><path d="M13.4 12.5v2.8l2.8 -1.4v-2.8z" fill="#1a5296" opacity=".55"/></svg></div>
<span id="t22" class="a t sg" style="top:167px;line-height:14px;left:676.5px;letter-spacing:-0.170px;">New segment</span>
<div class="a" style="left:1038px;top:167px;width:2px;height:16px;background:#f6faff;border-left:1px solid #b4c8e6"></div>
<div class="a" style="left:1041px;top:166px;line-height:0"><svg width="16" height="16" viewBox="0 0 16 16"><defs><linearGradient id="g12" x1="0" y1="0" x2="0" y2="1"><stop offset="0" stop-color="#e86060"/><stop offset=".5" stop-color="#e82828"/><stop offset="1" stop-color="#c81010"/></linearGradient></defs><path d="M.500 3.600l3.100-3.100 4.400 4.400 4.400-4.400 3.100 3.100-4.400 4.400 4.400 4.400-3.100 3.100-4.400-4.400-4.400 4.400-3.100-3.100 4.400-4.400z" fill="url(#g12)" stroke="#7a0c0c" stroke-width=".9" stroke-linejoin="round"/></svg></div>
<span id="t23" class="a t ms" style="top:196px;line-height:14px;right:721px;">Content Name:</span>
<div class="a inp" style="left:374px;top:193px;width:218px;height:19px;"></div>
<span id="t24" class="a t ms" style="top:196px;line-height:14px;left:377.5px;letter-spacing:-0.365px;">Products</span>
<span id="t25" class="a t ms" style="top:222px;line-height:14px;right:721px;">Heading:</span>
<div class="a inp" style="left:374px;top:219px;width:218px;height:19px;"></div>
<span id="t26" class="a t ms" style="top:222px;line-height:14px;left:377.5px;letter-spacing:-0.275px;">Product Offering</span>
<span id="t27" class="a t ms" style="top:196.5px;line-height:14px;right:430px;">Segment:</span>
<div class="a " style="left:666px;top:193px;width:253px;height:22px;border:1px solid #abadb3;background:#fff"></div>
<div class="a" style="left:669px;top:196.5px;line-height:0"><svg width="16" height="16" viewBox="0 0 16 16"><path d="M5.2 1.7l2.8 -1.4 2.8 1.4v2.8l-2.8 1.4 -2.8 -1.4z" fill="#2a74c4" stroke="#1a5296" stroke-width=".5"/><path d="M5.2 1.7l2.8 -1.4 2.8 1.4 -2.8 1.4z" fill="#8cc8f4"/><path d="M8 3.1v2.8l2.8 -1.4v-2.8z" fill="#1a5296" opacity=".55"/><path d="M2.4 6.4l2.8 -1.4 2.8 1.4v2.8l-2.8 1.4 -2.8 -1.4z" fill="#2a74c4" stroke="#1a5296" stroke-width=".5"/><path d="M2.4 6.4l2.8 -1.4 2.8 1.4 -2.8 1.4z" fill="#8cc8f4"/><path d="M5.2 7.8v2.8l2.8 -1.4v-2.8z" fill="#1a5296" opacity=".55"/><path d="M8 6.4l2.8 -1.4 2.8 1.4v2.8l-2.8 1.4 -2.8 -1.4z" fill="#2a74c4" stroke="#1a5296" stroke-width=".5"/><path d="M8 6.4l2.8 -1.4 2.8 1.4 -2.8 1.4z" fill="#8cc8f4"/><path d="M10.8 7.8v2.8l2.8 -1.4v-2.8z" fill="#1a5296" opacity=".55"/><path d="M-0.2 11.1l2.8 -1.4 2.8 1.4v2.8l-2.8 1.4 -2.8 -1.4z" fill="#2a74c4" stroke="#1a5296" stroke-width=".5"/><path d="M-0.2 11.1l2.8 -1.4 2.8 1.4 -2.8 1.4z" fill="#8cc8f4"/><path d="M2.6 12.5v2.8l2.8 -1.4v-2.8z" fill="#1a5296" opacity=".55"/><path d="M5.2 11.3l2.8 -1.4 2.8 1.4v2.8l-2.8 1.4 -2.8 -1.4z" fill="#2a74c4" stroke="#1a5296" stroke-width=".5"/><path d="M5.2 11.3l2.8 -1.4 2.8 1.4 -2.8 1.4z" fill="#8cc8f4"/><path d="M8 12.7v2.8l2.8 -1.4v-2.8z" fill="#1a5296" opacity=".55"/><path d="M10.6 11.1l2.8 -1.4 2.8 1.4v2.8l-2.8 1.4 -2.8 -1.4z" fill="#2a74c4" stroke="#1a5296" stroke-width=".5"/><path d="M10.6 11.1l2.8 -1.4 2.8 1.4 -2.8 1.4z" fill="#8cc8f4"/><path d="M13.4 12.5v2.8l2.8 -1.4v-2.8z" fill="#1a5296" opacity=".55"/></svg></div>
<span id="t28" class="a t ms" style="top:196.5px;line-height:14px;left:689px;">{ All Segments }</span>
<div class="a " style="left:902px;top:194px;width:16px;height:20px;border:1px solid #707070;border-radius:2px;background:linear-gradient(#f2f2f2 0%,#ebebeb 48%,#dddddd 52%,#cfcfcf 100%);box-shadow:inset 0 0 0 1px #fcfcfc"></div>
<div class="a" style="left:906px;top:202px;border:4px solid transparent;border-top:4px solid #000;border-bottom:none;width:0;height:0"></div>
<span id="t29" class="a t ms" style="top:224.5px;line-height:14px;right:430px;">Mode:</span>
<div class="a " style="left:666px;top:222px;width:253px;height:20px;border:1px solid #707070;border-radius:3px;background:linear-gradient(#f2f2f2 0%,#ebebeb 48%,#dddddd 52%,#cfcfcf 100%);box-shadow:inset 0 0 0 1px #fcfcfc"></div>
<span id="t30" class="a t ms" style="top:224.8px;line-height:14px;left:670.3px;letter-spacing:-0.195px;">Restrict selection to single option</span>
<div class="a" style="left:906px;top:230px;border:4px solid transparent;border-top:4px solid #000;border-bottom:none;width:0;height:0"></div>
<div class="a cb" style="left:374px;top:249.5px"></div>
<span id="t31" class="a t ms" style="top:249px;line-height:14px;left:391.5px;letter-spacing:0.019px;">Skip User Input</span>
<div class="a cb" style="left:481px;top:249.5px"><svg width="11" height="11" viewBox="0 0 11 11" style="position:absolute;left:0;top:0"><path d="M2.200 5l2.300 3.300 4.300-6.600" fill="none" stroke="#4456b0" stroke-width="1.600"/></svg></div>
<span id="t32" class="a t ms" style="top:249px;line-height:14px;left:498px;">Start on new page</span>
<div class="a tb" style="left:276px;top:269px;width:781px;height:23px;"></div>
<div class="a" style="left:279px;top:272px;width:2px;height:16px;background:repeating-linear-gradient(#8aa4cc 0 2px,transparent 2px 4px)"></div>
<div class="a" style="left:280px;top:273px;width:2px;height:16px;background:repeating-linear-gradient(rgba(255,255,255,.9) 0 2px,transparent 2px 4px)"></div>
<div class="a" style="left:286px;top:273px;line-height:0"><svg width="14" height="14" viewBox="0 0 14 14"><defs><linearGradient id="g13" x1="0" y1="0" x2="0" y2="1"><stop offset="0" stop-color="#ffffff"/><stop offset="1" stop-color="#dfe4ec"/></linearGradient></defs><circle cx="7" cy="7" r="6.500" fill="url(#g13)" stroke="#b4bccc" stroke-width=".8"/><path d="M4 6.500l3-2.700 3 2.700M4 10l3-2.700 3 2.700" fill="none" stroke="#222" stroke-width="1.200"/></svg></div>
<span id="t33" class="a t sg" style="top:273px;line-height:14px;left:309.5px;letter-spacing:-0.303px;">Expresso Coffee Machine #1</span>
<div class="a" style="left:472px;top:272px;line-height:0"><svg width="16" height="16" viewBox="0 0 16 16"><path d="M1.500 .500h7l3.500 3.500v11.500h-10.500z" fill="#fdfdfd" stroke="#a2a8b0"/><path d="M8.500 .500v3.500h3.500" fill="#eef0f3" stroke="#a2a8b0"/><path d="M3.500 5.500h4M3.500 7.500h6M3.500 9.500h3M3.500 11.500h3" stroke="#c4c8ce"/><rect x="6.500" y="9.500" width="6" height="6" rx="1" fill="#e4eefa" stroke="#2a4f86"/><path d="M7.300 11.200l2.300 3 4.200-7.200" fill="none" stroke="#1e5fc0" stroke-width="2"/></svg></div>
<div class="a" style="left:495px;top:274px;width:2px;height:14px;background:#f6faff;border-left:1px solid #b4c8e6"></div>
<span id="t34" class="a t sg" style="top:273px;line-height:14px;left:501.5px;letter-spacing:-0.170px;">Default:</span>
<div class="a " style="left:549px;top:276px;width:10px;height:10px;border:1px solid #2a2a2a;border-radius:2px;background:linear-gradient(135deg,#dfe4ec,#fff)"></div>
<div class="a" style="left:1034px;top:272px;line-height:0"><svg width="16" height="16" viewBox="0 0 16 16"><path d="M.500 .500h7l3.500 3.500v11.500h-10.500z" fill="#fdfdfd" stroke="#a2a8b0"/><path d="M7.500 .500v3.500h3.500" fill="#eef0f3" stroke="#a2a8b0"/><path d="M2.500 5.500h4M2.500 7.500h5M2.500 9.500h3M2.500 11.500h3" stroke="#c4c8ce"/><path d="M6 8l7.500 7.500M13.500 8l-7.500 7.500" stroke="#c41420" stroke-width="2.300"/></svg></div>
<div class="a " style="left:276px;top:292px;width:781px;height:26px;border-right:1px solid #c4c4c4;border-bottom:1px solid #ececec;border-radius:0 0 3px 0;background:#fff"></div>
<div class="a" style="left:279px;top:297px;width:2px;height:16px;background:repeating-linear-gradient(#a8a8a8 0 2px,transparent 2px 4px)"></div>
<div class="a" style="left:280px;top:298px;width:2px;height:16px;background:repeating-linear-gradient(rgba(255,255,255,.9) 0 2px,transparent 2px 4px)"></div>
<div class="a" style="left:285px;top:296.5px;line-height:0"><svg width="16" height="16" viewBox="0 0 16 16"><path d="M2.500 5l4-1.500 2 1.500 6-.500.500 8.500-11 1z" fill="#d8b050" stroke="#8a6a20" stroke-width=".7"/><path d="M.500 7.500l10.500-1 4.500 1-2.500 7-9 1.300z" fill="#f2d888" stroke="#8a6a20" stroke-width=".7"/><path d="M2 7.500c-.500-3.500 1-6.500 5-6.800 3.500-.200 5 2 5.300 5l-3.300.300c-.300-1.800-1-2.500-2.300-2.300-1.200.200-1.700 1.500-1.500 3.500z" fill="#e02828" stroke="#8e1010" stroke-width=".6"/><path d="M3 4.500c.800-2 2.500-3 4.500-2.800" fill="none" stroke="#f8a8a8" stroke-width=".9"/></svg></div>
<span id="t35" class="a t sg" style="top:297.5px;line-height:14px;left:304.5px;letter-spacing:0.217px;">Import from file</span>
<div class="a" style="left:392px;top:297px;line-height:0"><svg width="16" height="16" viewBox="0 0 16 16"><defs><linearGradient id="g14" x1="0" y1="0" x2="0" y2="1"><stop offset="0" stop-color="#1e3e60"/><stop offset=".5" stop-color="#2f6496"/><stop offset="1" stop-color="#1c3a5a"/></linearGradient></defs><path d="M.500 1.500q0-1 1-1h13q1 0 1 1v13q0 1-1 1h-12.500l-1.500-1.500z" fill="url(#g14)" stroke="#14283e"/><rect x="2.500" y="1.500" width="11" height="5.500" fill="#fafcfe" stroke="#aebccc" stroke-width=".6"/><path d="M3.500 3.500h9M3.500 5.500h9" stroke="#c2d0e0"/><rect x="4" y="10" width="8" height="5.500" fill="#cfd6de" stroke="#7a8694" stroke-width=".5"/><rect x="5.500" y="11" width="2" height="3.500" fill="#1c2630"/></svg></div>
<span id="t36" class="a t sg" style="top:297.5px;line-height:14px;left:410.5px;letter-spacing:0.165px;">Import from copy library</span>
<div class="a" style="left:545px;top:297px;line-height:0"><svg width="16" height="16" viewBox="0 0 16 16"><path d="M.500 1.500q0-1 1-1h13q1 0 1 1v13q0 1-1 1h-12.500l-1.500-1.500z" fill="#2c2f34" stroke="#14161a"/><rect x="2.500" y="1.500" width="11" height="5.500" fill="#fafcfe" stroke="#aebccc" stroke-width=".6"/><path d="M3.500 3.500h9M3.500 5.500h9" stroke="#b8cce6"/><rect x="4" y="10" width="8" height="5.500" fill="#e8eaec"/><rect x="5" y="11" width="2" height="3.500" fill="#1c2630"/><path d="M6.500 14.800l1-3 6-5.300 2 2.300-6 5.300z" fill="#f0d040" stroke="#8a6c10" stroke-width=".7"/><path d="M13.500 6.500l1.200-1 2 2.300-1.200 1z" fill="#d83030"/><path d="M6.500 14.800l1-3 2 2.300z" fill="#f4e4b8"/></svg></div>
<span id="t37" class="a t sg" style="top:297.5px;line-height:14px;left:564px;letter-spacing:-0.119px;">Save to copy library</span>
<span id="t38" class="a t ms" style="top:320px;line-height:14px;left:278px;">Heading</span>
<div class="a inp" style="left:277px;top:336px;width:780px;height:20px;"></div>
<span id="t39" class="a t ms" style="top:339px;line-height:14px;left:279px;letter-spacing:-0.251px;">Expresso Coffee Machine</span>
<span id="t40" class="a t ms" style="top:357.5px;line-height:14px;left:278px;">Pre Content - Selected</span>
<span id="t41" class="a t ms" style="top:357.5px;line-height:14px;left:673px;">Pre Content - Not Selected</span>
<div class="a ta" style="left:277px;top:374px;width:390px;height:52px;"></div>
<div class="a sb" style="left:649px;top:376px;width:16px;height:48px;"></div>
<svg class="a" style="left:653px;top:381px" width="8" height="5" viewBox="0 0 8 5"><path d="M0 4.500l4-4 4 4z" fill="#9a9a9a"/></svg>
<svg class="a" style="left:653px;top:414px" width="8" height="5" viewBox="0 0 8 5"><path d="M0 .500l4 4 4-4z" fill="#9a9a9a"/></svg>
<div class="a ta" style="left:671px;top:374px;width:386px;height:52px;"></div>
<div class="a sb" style="left:1039px;top:376px;width:16px;height:48px;"></div>
<svg class="a" style="left:1043px;top:381px" width="8" height="5" viewBox="0 0 8 5"><path d="M0 4.500l4-4 4 4z" fill="#9a9a9a"/></svg>
<svg class="a" style="left:1043px;top:414px" width="8" height="5" viewBox="0 0 8 5"><path d="M0 .500l4 4 4-4z" fill="#9a9a9a"/></svg>
<div class="a " style="left:276px;top:428px;width:781px;height:1px;background:#ececec"></div>
<span id="t42" class="a t ms" style="top:430.5px;line-height:14px;left:278px;">Content - Selected</span>
<span id="t43" class="a t ms" style="top:430.5px;line-height:14px;left:673px;">Content - Not Selected</span>
<div class="a ta" style="left:277px;top:447px;width:390px;height:100px;border-color:#3d7bad #a4c9e3 #b7d9ed #b5cfe7;"></div>
<div class="a sb" style="left:649px;top:449px;width:16px;height:96px;"></div>
<svg class="a" style="left:653px;top:454px" width="8" height="5" viewBox="0 0 8 5"><path d="M0 4.500l4-4 4 4z" fill="#9a9a9a"/></svg>
<svg class="a" style="left:653px;top:535px" width="8" height="5" viewBox="0 0 8 5"><path d="M0 .500l4 4 4-4z" fill="#9a9a9a"/></svg>
<div class="a ta" style="left:671px;top:447px;width:386px;height:100px;"></div>
<div class="a sb" style="left:1039px;top:449px;width:16px;height:96px;"></div>
<svg class="a" style="left:1043px;top:454px" width="8" height="5" viewBox="0 0 8 5"><path d="M0 4.500l4-4 4 4z" fill="#9a9a9a"/></svg>
<svg class="a" style="left:1043px;top:535px" width="8" height="5" viewBox="0 0 8 5"><path d="M0 .500l4 4 4-4z" fill="#9a9a9a"/></svg>
<div class="a " style="left:276px;top:549px;width:781px;height:1px;background:#ececec"></div>
<span id="t44" class="a t ms" style="top:551.5px;line-height:14px;left:278px;">Post Content - Selected</span>
<span id="t45" class="a t ms" style="top:551.5px;line-height:14px;left:673px;">Post Content - Not Selected</span>
<div class="a ta" style="left:277px;top:568px;width:390px;height:52px;"></div>
<div class="a sb" style="left:649px;top:570px;width:16px;height:48px;"></div>
<svg class="a" style="left:653px;top:575px" width="8" height="5" viewBox="0 0 8 5"><path d="M0 4.500l4-4 4 4z" fill="#9a9a9a"/></svg>
<svg class="a" style="left:653px;top:608px" width="8" height="5" viewBox="0 0 8 5"><path d="M0 .500l4 4 4-4z" fill="#9a9a9a"/></svg>
<div class="a ta" style="left:671px;top:568px;width:386px;height:52px;"></div>
<div class="a sb" style="left:1039px;top:570px;width:16px;height:48px;"></div>
<svg class="a" style="left:1043px;top:575px" width="8" height="5" viewBox="0 0 8 5"><path d="M0 4.500l4-4 4 4z" fill="#9a9a9a"/></svg>
<svg class="a" style="left:1043px;top:608px" width="8" height="5" viewBox="0 0 8 5"><path d="M0 .500l4 4 4-4z" fill="#9a9a9a"/></svg>
<div class="a " style="left:276px;top:621px;width:781px;height:1px;background:#ececec"></div>
<div class="a cb" style="left:276px;top:626.5px"><svg width="11" height="11" viewBox="0 0 11 11" style="position:absolute;left:0;top:0"><path d="M2.200 5l2.300 3.300 4.300-6.600" fill="none" stroke="#4456b0" stroke-width="1.600"/></svg></div>
<span id="t46" class="a t ms" style="top:625.5px;line-height:14px;left:293.5px;">Show heading</span>
<div class="a cb" style="left:276px;top:646.5px"><svg width="11" height="11" viewBox="0 0 11 11" style="position:absolute;left:0;top:0"><path d="M2.200 5l2.300 3.300 4.300-6.600" fill="none" stroke="#4456b0" stroke-width="1.600"/></svg></div>
<span id="t47" class="a t ms" style="top:645.5px;line-height:14px;left:293.5px;">Omit Spell Check</span>
<div class="a cb" style="left:276px;top:667.5px"><svg width="11" height="11" viewBox="0 0 11 11" style="position:absolute;left:0;top:0"><path d="M2.200 5l2.300 3.300 4.300-6.600" fill="none" stroke="#4456b0" stroke-width="1.600"/></svg></div>
<span id="t48" class="a t ms" style="top:666.5px;line-height:14px;left:293.5px;">Omit Profanity Check</span>
<div class="a cb" style="left:408px;top:628px"></div>
<span id="t49" class="a t ms" style="top:626.5px;line-height:14px;left:425px;">Content is editable</span>
<div class="a cb" style="left:408px;top:647.5px"><svg width="11" height="11" viewBox="0 0 11 11" style="position:absolute;left:0;top:0"><path d="M2.200 5l2.300 3.300 4.300-6.600" fill="none" stroke="#4456b0" stroke-width="1.600"/></svg></div>
<span id="t50" class="a t ms" style="top:647px;line-height:14px;left:425px;">Show content</span>
<div class="a cb" style="left:408px;top:667.5px"></div>
<span id="t51" class="a t ms" style="top:667px;line-height:14px;left:425px;">Select from library</span>
<div class="a cb" style="left:523px;top:627.5px"><svg width="11" height="11" viewBox="0 0 11 11" style="position:absolute;left:0;top:0"><path d="M2.200 5l2.300 3.300 4.300-6.600" fill="none" stroke="#4456b0" stroke-width="1.600"/></svg></div>
<span id="t52" class="a t ms" style="top:626.5px;line-height:14px;left:540.5px;">Display content as HTML</span>
<div class="a cb" style="left:523px;top:647.5px"><svg width="11" height="11" viewBox="0 0 11 11" style="position:absolute;left:0;top:0"><path d="M2.200 5l2.300 3.300 4.300-6.600" fill="none" stroke="#4456b0" stroke-width="1.600"/></svg></div>
<span id="t53" class="a t ms" style="top:647px;line-height:14px;left:540.5px;">HTML snippet only</span>
<span id="t54" class="a t ms" style="top:626px;line-height:14px;right:221.5px;">Display height:</span>
<div class="a inp" style="left:873px;top:624px;width:46px;height:20px;"></div>
<span id="t55" class="a t ms" style="top:626.5px;line-height:14px;left:885px;">300</span>
<span id="t56" class="a t ms" style="top:626px;line-height:14px;right:83px;">Max Characters:</span>
<div class="a inp" style="left:1011px;top:624px;width:46px;height:20px;"></div>
<span id="t57" class="a t ms" style="top:626.5px;line-height:14px;left:1031px;">0</span>
<span id="t58" class="a t ms" style="top:646.5px;line-height:14px;right:83px;">Max Words:</span>
<div class="a inp" style="left:1011px;top:644px;width:46px;height:20px;"></div>
<span id="t59" class="a t ms" style="top:646.5px;line-height:14px;left:1031px;">0</span>
<span id="t60" class="a t ms" style="top:667px;line-height:14px;right:221.5px;">Copy text from content item:</span>
<div class="a inp" style="left:873px;top:664px;width:46px;height:20px;"></div>
<div class="a cb" style="left:926px;top:667.5px"></div>
<span id="t61" class="a t ms" style="top:667px;line-height:14px;left:945px;">Copy as plain text</span>
<div class="a" style="left:638px;top:635px;width:317px;height:36px;border:7px solid #f41010;border-radius:10px;background:#fff;box-shadow:-3px 3px 3px rgba(0,0,0,.75)"></div>
<span id="t62" class="a t ms" style="top:646.5px;line-height:14px;right:221px;">Set selected status from</span>
<div class="a inp" style="left:873px;top:644px;width:46px;height:20px;"></div>
<div class="a" style="left:645px;top:642px;width:303px;height:22px;border-radius:3px;box-shadow:inset -3px 3px 3px rgba(0,0,0,.8)"></div>
<div class="a " style="left:117px;top:720px;width:951px;height:1px;background:#e4e4e4"></div>
<div class="a " style="left:876px;top:721px;width:1px;height:31px;background:#e4e4e4"></div>
<span id="t63" class="a t ms" style="top:723px;line-height:14px;left:120px;">Record last modifed on:</span>
<span id="t64" class="a t ms" style="top:737.5px;line-height:14px;left:120px;">6 Oct 2014, 12:10 p.m.</span>
<div class="a btn" style="left:882px;top:727px;width:100px;height:21px;"></div>
<span id="t65" class="a t ms" style="top:730px;line-height:14px;left:898px;letter-spacing:0.112px;">Save &amp; Close</span>
<div class="a btn" style="left:989px;top:727px;width:73px;height:21px;"></div>
<span id="t66" class="a t ms" style="top:730px;line-height:14px;left:1008px;letter-spacing:0.125px;">Cancel</span>
</body></html>
